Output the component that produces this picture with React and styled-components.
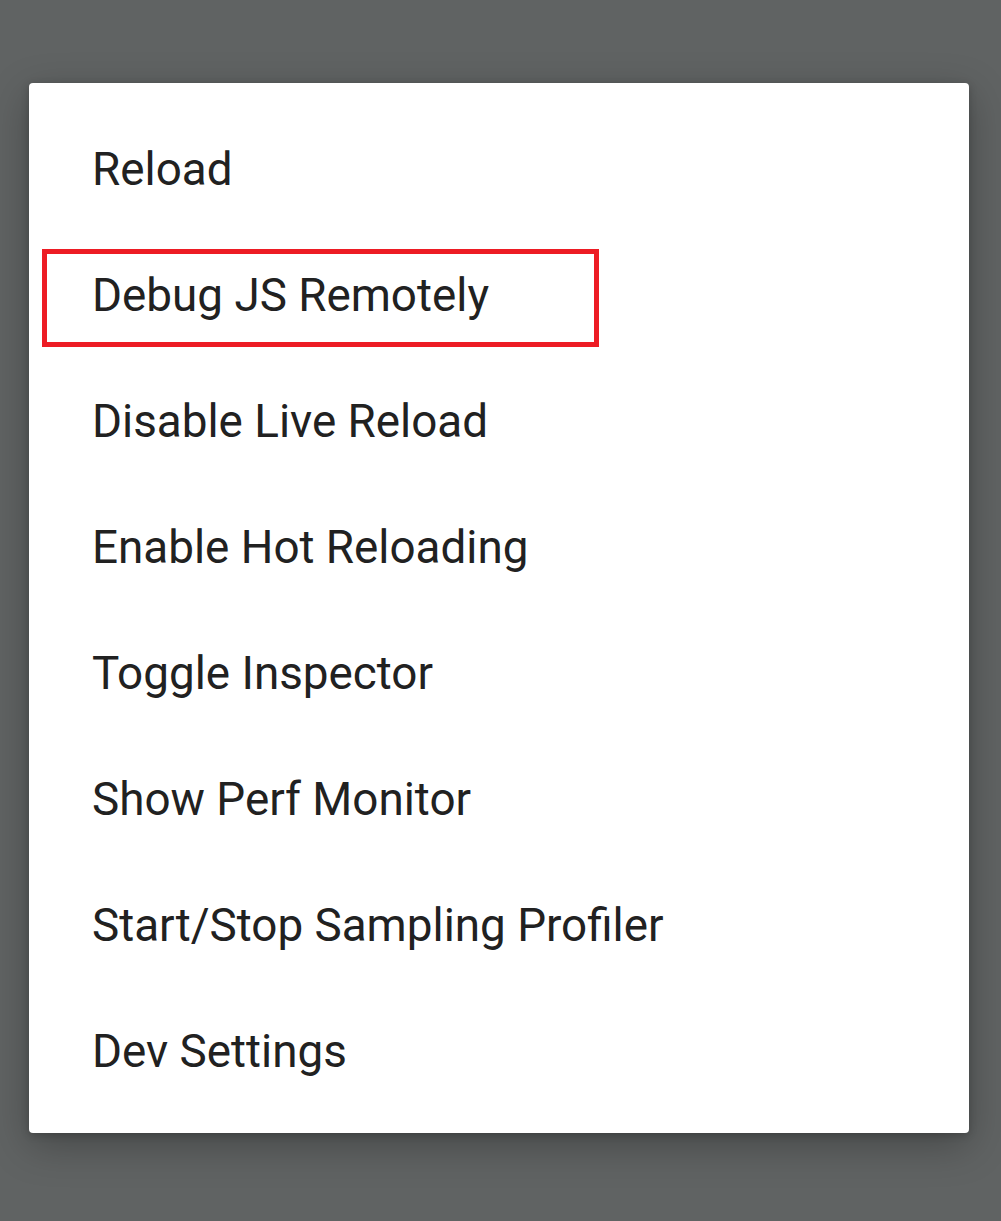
import React from 'react'
import styled, { createGlobalStyle } from 'styled-components'

const GlobalStyle = createGlobalStyle`
  html, body {
    margin: 0;
    padding: 0;
    background: #606363;
  }
  body {
    font-family: Roboto, "Noto Sans", sans-serif;
  }
`

const Screen = styled.div`
  width: 1001px;
  height: 1221px;
  padding: 83px 32px 0 29px;
  box-sizing: border-box;
  background: #606363;
`

const Menu = styled.ul`
  list-style: none;
  margin: 0;
  width: 940px;
  height: 1050px;
  padding: 23px 0 19px;
  box-sizing: border-box;
  background: #ffffff;
  border-radius: 4px;
  box-shadow: 0 12px 40px rgba(0, 0, 0, 0.28), 0 2px 8px rgba(0, 0, 0, 0.2);
`

const Item = styled.li`
  position: relative;
  display: flex;
  align-items: center;
  height: 126px;
  padding-left: 63px;
  font-size: 45.8px;
  color: #212121;
`

const Highlight = styled.span`
  position: absolute;
  left: 13px;
  top: 17px;
  width: 557px;
  height: 98px;
  box-sizing: border-box;
  border: 5px solid #ed1c24;
  pointer-events: none;
`

const items = [
  'Reload',
  'Debug JS Remotely',
  'Disable Live Reload',
  'Enable Hot Reloading',
  'Toggle Inspector',
  'Show Perf Monitor',
  'Start/Stop Sampling Profiler',
  'Dev Settings',
]

const App = () => (
  <>
    <GlobalStyle />
    <Screen>
      <Menu>
        {items.map((label, i) => (
          <Item key={label}>
            {label}
            {i === 1 && <Highlight />}
          </Item>
        ))}
      </Menu>
    </Screen>
  </>
)

export default App
